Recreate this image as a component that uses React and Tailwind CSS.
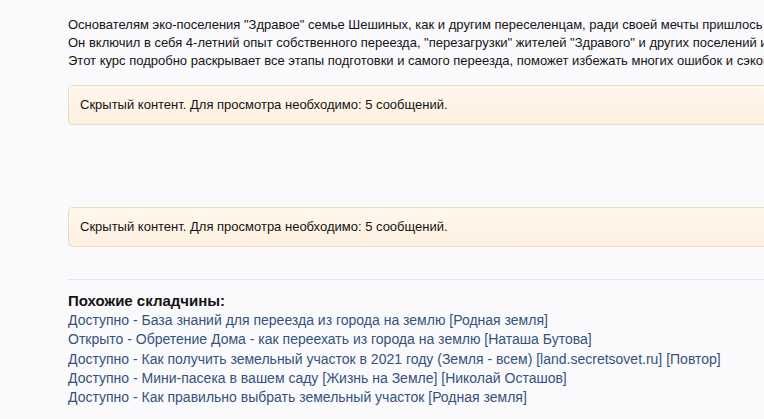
import React from 'react';

const related = [
  'Доступно - База знаний для переезда из города на землю [Родная земля]',
  'Открыто - Обретение Дома - как переехать из города на землю [Наташа Бутова]',
  'Доступно - Как получить земельный участок в 2021 году (Земля - всем) [land.secretsovet.ru] [Повтор]',
  'Доступно - Мини-пасека в вашем саду [Жизнь на Земле] [Николай Осташов]',
  'Доступно - Как правильно выбрать земельный участок [Родная земля]',
];

const HiddenBox = () => (
  <div className="w-[760px] rounded-[4px] border border-[#f0dcc6] bg-gradient-to-b from-[#fff7ec] to-[#fdf0e0] px-[11px] py-[10px] leading-[18px]">
    Скрытый контент. Для просмотра необходимо: 5 сообщений.
  </div>
);

const App = () => {
  return (
    <div className="h-[419px] w-[764px] overflow-hidden bg-[#fafafd] font-['Liberation_Sans',Arial,sans-serif] text-[13px] text-[#141414]">
      <div className="whitespace-nowrap pl-[68px] pt-[16px]">
        <div className="leading-[18px]">
          <div>Основателям эко-поселения "Здравое" семье Шешиных, как и другим переселенцам, ради своей мечты пришлось пройти немалый путь.</div>
          <div>Он включил в себя 4-летний опыт собственного переезда, "перезагрузки" жителей "Здравого" и других поселений и многое другое.</div>
          <div>Этот курс подробно раскрывает все этапы подготовки и самого переезда, поможет избежать многих ошибок и сэкономить время.</div>
        </div>

        <div className="mt-[15px]">
          <HiddenBox />
        </div>

        <div className="mt-[82px]">
          <HiddenBox />
        </div>

        <div className="mt-[32px] h-px w-[760px] bg-[#e3e9f0]" />

        <div className="mt-[11px]">
          <div className="text-[15px] font-bold leading-[20px]">Похожие складчины:</div>
          {related.map((item) => (
            <div key={item} className="text-[14px] leading-[19.3px]">
              <a href="#" className="text-[#34527c]">{item}</a>
            </div>
          ))}
        </div>
      </div>
    </div>
  );
};

export default App;
